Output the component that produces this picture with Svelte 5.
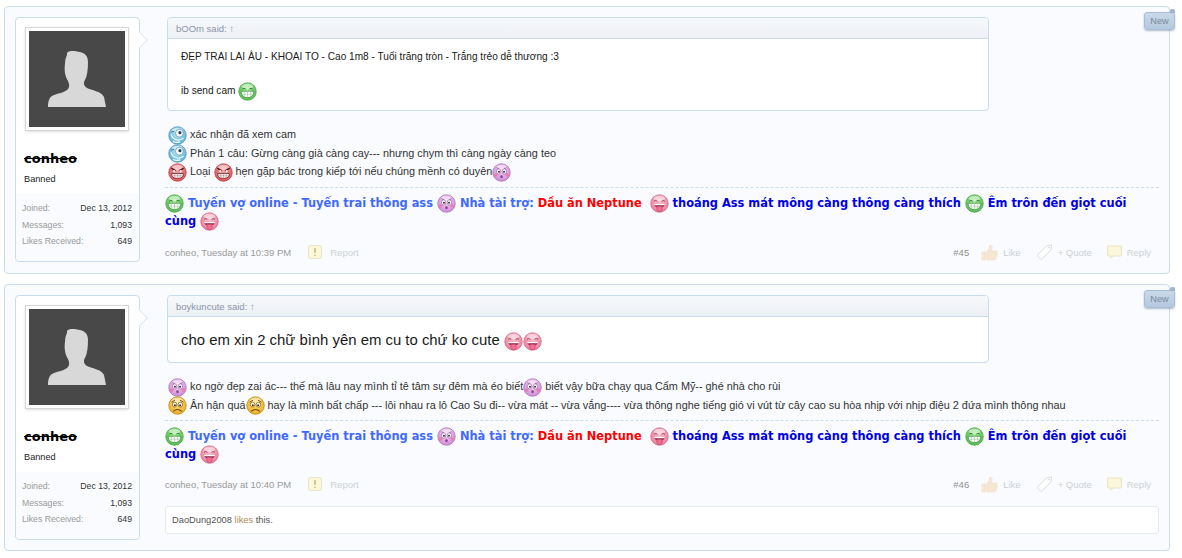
{#snippet smiley(kind)}
  <svg class="smiley" viewBox="0 0 18 18" aria-hidden="true">
    <circle cx="9" cy="9" r="8.3" fill="url(#g-{kind})" stroke={{ grin: '#4aa647', blue: '#4a93b8', red: '#b04348', purple: '#a873b5', pink: '#cf6a8c', sad: '#b9861a' }[kind]} stroke-width="0.7" />
    <ellipse cx="9" cy="4.2" rx="5.4" ry="2.6" fill="#fff" opacity="0.5" />
    {#if kind === 'grin'}
      <path d="M4 6.8q1.6-1.800 3.200 0M10.800 6.800q1.600-1.800 3.200 0" fill="none" stroke="#2c7a30" stroke-width=".9" />
      <path d="M2.800 8.800h12.400q-.6 6-6.200 6t-6.200-6z" fill="#fff" stroke="#2c7a30" stroke-width=".6" />
      <path d="M6 9v5.200M9 9v5.700M12 9v5.200M3.300 11.600h11.400" stroke="#9ccb9c" stroke-width=".6" />
    {:else if kind === 'blue'}
      <circle cx="10.800" cy="6.800" r="3.700" fill="#fff" stroke="#2a6a8e" stroke-width=".5" />
      <circle cx="11.300" cy="6.300" r="1.500" fill="#29404f" />
      <path d="M2.800 8q1.500 5 7 5.500 3-.2 5-2M4.500 14.700q3 1.400 7 .3" fill="none" stroke="#f2fbff" stroke-width="1.100" />
      <path d="M3.200 5.800q1.400-1 2.800-.4" fill="none" stroke="#1f5a7c" stroke-width=".8" />
    {:else if kind === 'red'}
      <path d="M3.200 4.800l4.200 2.600M14.800 4.800l-4.200 2.600" stroke="#5e1214" stroke-width="1.300" />
      <circle cx="6" cy="7.800" r="1.100" fill="#fff" /><circle cx="12" cy="7.800" r="1.100" fill="#fff" />
      <path d="M3.500 10h11q.4 4.600-5.500 4.600t-5.500-4.600z" fill="#fff" stroke="#5e1214" stroke-width=".7" />
      <path d="M6.500 10.100v4M9 10.100v4.400M11.500 10.100v4M3.800 12.100h10.400" stroke="#b98a8a" stroke-width=".6" />
    {:else if kind === 'purple'}
      <ellipse cx="6.300" cy="8" rx="2" ry="2.500" fill="#fff" stroke="#7a4487" stroke-width=".5" />
      <ellipse cx="11.700" cy="8" rx="2" ry="2.500" fill="#fff" stroke="#7a4487" stroke-width=".5" />
      <circle cx="6.600" cy="8.300" r=".9" fill="#33203a" /><circle cx="11.400" cy="8.300" r=".9" fill="#33203a" />
      <path d="M4 4.400l2.400 1M14 4.400l-2.400 1" stroke="#7a4487" stroke-width=".7" />
      <circle cx="3.500" cy="11.300" r="1.700" fill="#ef6f9f" opacity=".75" /><circle cx="14.500" cy="11.300" r="1.700" fill="#ef6f9f" opacity=".75" />
      <ellipse cx="9" cy="13" rx="1.200" ry="1.400" fill="#7a4487" />
    {:else if kind === 'pink'}
      <path d="M3.800 7q1.600-1.800 3.200 0M11 7q1.600-1.800 3.200 0" fill="none" stroke="#a33a60" stroke-width=".9" />
      <path d="M3.800 9.500h10.400q-.5 3.500-5.200 3.500t-5.200-3.500z" fill="#8a2448" />
      <path d="M3.800 9.500h10.400l-.4 1.200h-9.600z" fill="#fff" />
      <path d="M6.500 11.500h5v2.800a2.500 2.500 0 0 1-5 0z" fill="#f26d90" stroke="#b23b62" stroke-width=".5" />
    {:else}
      <path d="M3.500 5.800l3-1.800M14.500 5.800l-3-1.800" stroke="#6d4500" stroke-width=".9" />
      <ellipse cx="6.300" cy="8.200" rx="2.100" ry="2.300" fill="#fff" stroke="#6d4500" stroke-width=".6" />
      <ellipse cx="11.700" cy="8.200" rx="2.100" ry="2.300" fill="#fff" stroke="#6d4500" stroke-width=".6" />
      <circle cx="6.500" cy="8.800" r=".9" fill="#3b2a05" /><circle cx="11.500" cy="8.800" r=".9" fill="#3b2a05" />
      <path d="M4.800 14.600q4.200-3.600 8.400 0" fill="none" stroke="#6d4500" stroke-width="1.100" />
    {/if}
  </svg>
{/snippet}

{#snippet signature()}
  <div class="signature">
    {@render smiley('grin')} <span class="sig-light">Tuyến vợ online - Tuyến trai thông ass</span>
    {@render smiley('purple')} <span class="sig-light">Nhà tài trợ:</span>
    <span class="sig-red">Dầu ăn Neptune</span>&nbsp; {@render smiley('pink')}
    <span class="sig-blue">thoáng Ass mát mông càng thông càng thích</span>
    {@render smiley('grin')} <span class="sig-blue">Êm trôn đến giọt cuối cùng</span>
    {@render smiley('pink')}
  </div>
{/snippet}

{#snippet sidebar()}
  <aside class="user">
    <div class="arrow"></div>
    <div class="avatar">
      <svg viewBox="0 0 96 96" width="96" height="96" aria-hidden="true">
        <rect width="96" height="96" fill="#484848" />
        <path fill="#d8d8d8" d="M38 22c2-3 8-2 13-1 5 1 8 4 8 10 0 8-1 14-3 18-2 3-1 6 2 8 6 3 14 3 17 9l2 10H19c0-5 1-9 4-11 5-3 13-3 16-7 2-3 1-5 0-8-3-4-4-12-3-17 0-4 1-7 2-9z" />
      </svg>
    </div>
    <div class="identity">
      <div class="username">conheo</div>
      <div class="title">Banned</div>
    </div>
    <dl class="stats">
      <div><dt>Joined:</dt><dd>Dec 13, 2012</dd></div>
      <div><dt>Messages:</dt><dd>1,093</dd></div>
      <div><dt>Likes Received:</dt><dd>649</dd></div>
    </dl>
  </aside>
{/snippet}

{#snippet footer(time, num)}
  <div class="footer">
    <span class="stamp">conheo, {time}</span>
    <span class="report">
      <svg width="14" height="14" viewBox="0 0 14 14" aria-hidden="true">
        <rect x=".5" y=".5" width="13" height="13" rx="2" fill="#fbf8d8" stroke="#e8e5c8" />
        <path d="M7 3v5M7 9.500v1.500" stroke="#bdb98f" stroke-width="1.500" />
      </svg>
      Report
    </span>
    <span class="num">{num}</span>
    <span class="action like">
      <svg width="17" height="17" viewBox="0 0 17 17" aria-hidden="true">
        <path d="M1 8h3v8H1zM5 8l3-3 1-4c2 0 2.500 2 2 3.500L10.500 7H15c1.500 0 1.500 2 .8 2.500.8.800.4 2-.3 2.300.4 1-.1 1.800-.8 2 .2 1-.4 2.200-1.700 2.200H8c-1.500 0-3-.5-3-1z" fill="#f7e6d3" stroke="#ecdcc9" stroke-width=".6" />
      </svg>
      Like
    </span>
    <span class="action quote">
      <svg width="17" height="17" viewBox="0 0 17 17" aria-hidden="true">
        <path d="M1 11.500L11 1.500l4.500-.5-.2 4.500L5.300 15.700z" fill="#fdfdfd" stroke="#dcdcdc" />
        <circle cx="13" cy="3.500" r=".8" fill="#cfcfcf" />
      </svg>
      + Quote
    </span>
    <span class="action reply">
      <svg width="15" height="14" viewBox="0 0 15 14" aria-hidden="true">
        <path d="M1.500 1h12a1 1 0 0 1 1 1v8a1 1 0 0 1-1 1H6l-2 2v-2H1.500a1 1 0 0 1-1-1V2a1 1 0 0 1 1-1z" fill="#fcf7da" stroke="#e8e3c4" />
      </svg>
      Reply
    </span>
  </div>
{/snippet}

<svg class="defs" width="0" height="0" aria-hidden="true">
  <defs>
    <radialGradient id="g-grin" cx=".5" cy=".4" r=".7"><stop offset="0" stop-color="#a6ec97" /><stop offset="1" stop-color="#45b342" /></radialGradient>
    <radialGradient id="g-blue" cx=".5" cy=".4" r=".7"><stop offset="0" stop-color="#bfeaf8" /><stop offset="1" stop-color="#4aa6d0" /></radialGradient>
    <radialGradient id="g-red" cx=".5" cy=".4" r=".7"><stop offset="0" stop-color="#f7a0a0" /><stop offset="1" stop-color="#d8474c" /></radialGradient>
    <radialGradient id="g-purple" cx=".5" cy=".4" r=".7"><stop offset="0" stop-color="#f6d2f6" /><stop offset="1" stop-color="#c77fd2" /></radialGradient>
    <radialGradient id="g-pink" cx=".5" cy=".4" r=".7"><stop offset="0" stop-color="#fbc0cc" /><stop offset="1" stop-color="#ea7092" /></radialGradient>
    <radialGradient id="g-sad" cx=".5" cy=".4" r=".7"><stop offset="0" stop-color="#ffe27a" /><stop offset="1" stop-color="#eba414" /></radialGradient>
  </defs>
</svg>

<div class="thread">
  <article class="post first">
    {@render sidebar()}
    <div class="main">
      <div class="content">
        <blockquote class="quote-box">
          <div class="attribution">bOOm said: ↑</div>
          <div class="quote-text q1">
            <p>ĐẸP TRAI LAI ÂU - KHOAI TO - Cao 1m8 - Tuổi trăng tròn - Trắng trẻo dễ thương :3</p>
            <p>ib send cam {@render smiley('grin')}</p>
          </div>
        </blockquote>
        <div class="message">
          <div>{@render smiley('blue')} xác nhận đã xem cam</div>
          <div>{@render smiley('blue')} Phán 1 câu: Gừng càng già càng cay--- nhưng chym thì càng ngày càng teo</div>
          <div>{@render smiley('red')} Loại {@render smiley('red')} hẹn gặp bác trong kiếp tới nếu chúng mềnh có duyên{@render smiley('purple')}</div>
        </div>
        {@render signature()}
      </div>
      {@render footer('Tuesday at 10:39 PM', '#45')}
    </div>
    <span class="badge">New</span>
  </article>

  <article class="post">
    {@render sidebar()}
    <div class="main">
      <div class="content">
        <blockquote class="quote-box">
          <div class="attribution">boykuncute said: ↑</div>
          <div class="quote-text q2">cho em xin 2 chữ bình yên em cu to chứ ko cute {@render smiley('pink')}{@render smiley('pink')}</div>
        </blockquote>
        <div class="message">
          <div>{@render smiley('purple')} ko ngờ đẹp zai ác--- thế mà lâu nay mình tỉ tê tâm sự đêm mà éo biết{@render smiley('purple')} biết vậy bữa chạy qua Cẩm Mỹ-- ghé nhà cho rùi</div>
          <div>{@render smiley('sad')} Ân hận quá{@render smiley('sad')} hay là mình bất chấp --- lôi nhau ra lô Cao Su đi-- vừa mát -- vừa vắng---- vừa thông nghe tiếng gió vi vút từ cây cao su hòa nhịp với nhịp điệu 2 đứa mình thông nhau</div>
        </div>
        {@render signature()}
      </div>
      {@render footer('Tuesday at 10:40 PM', '#46')}
      <div class="likes"><span>DaoDung2008</span> <em>likes</em> this.</div>
    </div>
    <span class="badge">New</span>
  </article>
</div>

<style>
  :global(body) {
    background: #fff;
    font-family: "Liberation Sans", Arial, sans-serif;
    font-size: 10px;
    color: #1a1a1a;
  }
  .defs { position: absolute; }
  .thread {
    display: flex;
    flex-direction: column;
    gap: 10px;
    padding: 6px 12px 0 4px;
  }
  .post {
    position: relative;
    display: flex;
    height: 267px;
    box-sizing: border-box;
    padding: 10px;
    background: #f9fbfe;
    border: 1px solid #c8dcee;
    border-radius: 4px;
  }
  .post .main { padding-bottom: 6px; }
  .post.first { height: 268px; }
  .post.first .main { padding-bottom: 3px; }
  .user {
    position: relative;
    flex: none;
    width: 125px;
    height: 245px;
    box-sizing: border-box;
    display: flex;
    flex-direction: column;
    background: #fff;
    border: 1px solid #c8dcee;
    border-radius: 4px;
  }
  .arrow {
    position: absolute;
    top: 15px;
    right: -7px;
    width: 13px;
    height: 13px;
    background: #fff;
    border: solid #dce8f3;
    border-width: 1px 1px 0 0;
    transform: rotate(45deg) scale(.9);
  }
  .avatar {
    margin: 10px 0 0 10px;
    width: 96px;
    height: 96px;
    border: 3px solid #fff;
    outline: 1px solid #d6d6d6;
    box-shadow: 0 1px 3px rgba(0,0,0,.25);
  }
  .avatar svg { display: block; }
  .identity { padding: 21px 0 0 8px; flex: 1; }
  .username {
    font: bold 13px/16px "DejaVu Sans", Verdana, sans-serif;
    color: #000;
    text-decoration: line-through;
  }
  .title { margin-top: 6px; font-size: 9.200px; line-height: 13px; color: #222; }
  .stats {
    margin: 0;
    padding: 6px 7px 11.500px 6px;
    background: #f9fbfe;
    font-size: 8.700px;
    line-height: 16.500px;
    border-radius: 0 0 4px 4px;
  }
  .stats div { display: flex; justify-content: space-between; }
  dt { color: #9a9a9a; }
  dd { margin: 0; color: #333; }
  .main {
    flex: 1;
    min-width: 0;
    margin-left: 25px;
    display: flex;
    flex-direction: column;
  }
  .content { flex: 1; }
  .quote-box {
    margin: 0 170px 0 2px;
    background: #fff;
    border: 1px solid #c8dcee;
    border-radius: 4px;
    overflow: hidden;
  }
  .attribution {
    height: 20px;
    line-height: 21px;
    padding-left: 8px;
    font-size: 9.500px;
    color: #8a95ab;
    background: linear-gradient(#f6f8fb, #edf0f5);
    border-bottom: 1px solid #c8dcee;
  }
  .quote-text { padding: 0 13px; }
  .q1 { height: 71px; font-size: 10.100px; line-height: 17px; padding-top: 9px; box-sizing: border-box; }
  .q1 p { margin: 0 0 17px; }
  .q2 { height: 45px; font-size: 14.900px; line-height: 18px; padding-top: 14px; box-sizing: border-box; }
  .message {
    margin: 14px 0 0 3px;
    font-size: 10.850px;
    line-height: 18.500px;
    color: #333;
  }
  .smiley {
    width: 19px;
    height: 19px;
    margin: -3px 0;
    vertical-align: middle;
  }
  .signature {
    margin-top: 6px;
    padding-top: 6px;
    border-top: 1px dashed #cfdcea;
    font: bold 11.420px/18px "DejaVu Sans", Verdana, sans-serif;
    color: #00f;
  }
  .sig-light { color: #4169ff; }
  .sig-red { color: #f00; }
  .sig-blue { color: #0000e6; }
  .footer {
    display: flex;
    align-items: center;
    height: 16px;
    font-size: 9.500px;
    color: #cdd1d6;
  }
  .stamp { color: #9a9a9a; }
  .report { display: flex; align-items: center; gap: 8px; margin-left: 17px; }
  .num { margin-left: auto; color: #8f8f8f; }
  .action { display: flex; align-items: center; gap: 5px; margin-left: 15px; }
  .action.like { margin-left: 12px; }
  .reply { margin-right: 8px; }
  .likes {
    margin-top: 14px;
    height: 28px;
    box-sizing: border-box;
    line-height: 27px;
    padding-left: 6px;
    font-size: 9.300px;
    background: #fff;
    border: 1px solid #e5ebf3;
    border-radius: 3px;
    color: #555;
  }
  .likes em { font-style: normal; color: #b08b55; }
  .badge {
    position: absolute;
    top: 5px;
    right: -6px;
    width: 29px;
    height: 16px;
    text-align: center;
    line-height: 16px;
    font-size: 9.200px;
    color: #78889c;
    background: linear-gradient(#c9d9ea, #b4c8de);
    border: 1px solid #a8bdd4;
    border-radius: 3px;
    box-shadow: 0 1px 2px rgba(40,70,110,.35);
  }
  .badge::before {
    content: "";
    position: absolute;
    top: -4px;
    right: -1px;
    width: 5px;
    height: 4px;
    background: #9db3cc;
    border-radius: 2px 2px 0 0;
  }
</style>
